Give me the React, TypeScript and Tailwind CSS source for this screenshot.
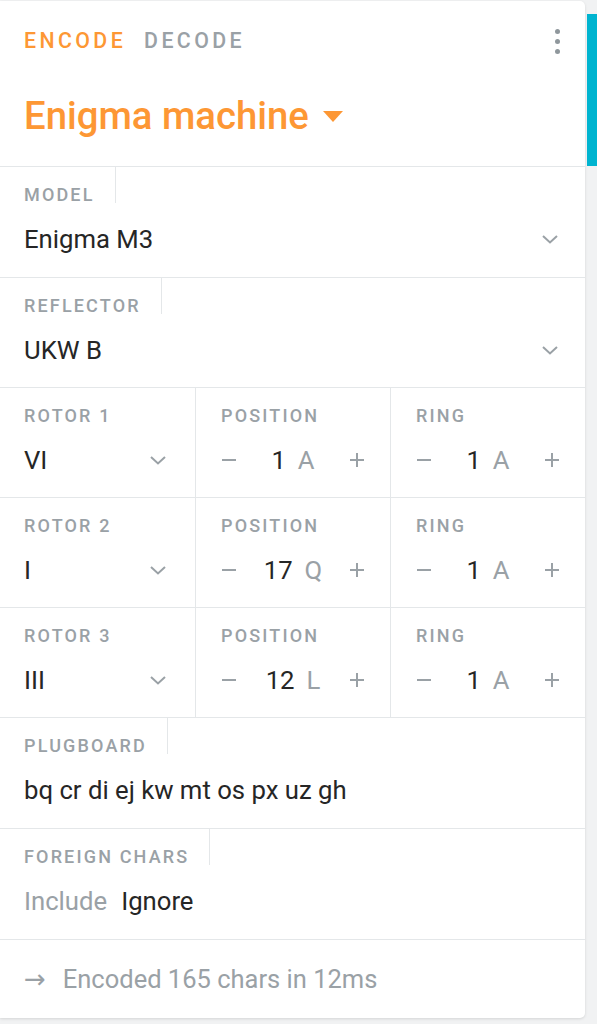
import { ReactNode } from 'react';

const ROTORS = [
  { label: 'ROTOR 1', value: 'VI', pos: 1, posLetter: 'A', ring: 1, ringLetter: 'A' },
  { label: 'ROTOR 2', value: 'I', pos: 17, posLetter: 'Q', ring: 1, ringLetter: 'A' },
  { label: 'ROTOR 3', value: 'III', pos: 12, posLetter: 'L', ring: 1, ringLetter: 'A' },
];

function Chevron() {
  return (
    <svg width="18" height="12" viewBox="0 0 18 12" className="shrink-0">
      <path d="M2 3 L9 9.5 L16 3" fill="none" stroke="#9aa1a6" strokeWidth="2" />
    </svg>
  );
}

function Minus() {
  return (
    <svg width="16" height="16" viewBox="0 0 16 16" className="shrink-0">
      <path d="M1 8 H15" stroke="#9aa1a6" strokeWidth="2" />
    </svg>
  );
}

function Plus() {
  return (
    <svg width="16" height="16" viewBox="0 0 16 16" className="shrink-0">
      <path d="M1 8 H15 M8 1 V15" stroke="#9aa1a6" strokeWidth="2" />
    </svg>
  );
}

// label with the little divider line on its right
function FieldLabel({ children, line = true }: { children: ReactNode; line?: boolean }) {
  return (
    <div className="flex">
      <span
        className={`pt-[19px] leading-[17px] text-[18px] font-medium tracking-[0.12em] text-[#9aa1a6] ${
          line ? 'pr-[20px] border-r border-[#e4e7e9]' : ''
        }`}
      >
        {children}
      </span>
    </div>
  );
}

function Stepper({ label, num, letter }: { label: string; num: number; letter: string }) {
  return (
    <div className="flex-1 border-l border-[#e4e7e9] pl-[25px] pr-[25px]">
      <FieldLabel line={false}>{label}</FieldLabel>
      <div className="mt-[20px] mb-[21px] h-[32px] flex items-center justify-between">
        <Minus />
        <div className="flex items-center gap-[12px] text-[25.7px] leading-[32px]">
          <span className="text-[#262626]">{num}</span>
          <span className="text-[#9aa1a6]">{letter}</span>
        </div>
        <Plus />
      </div>
    </div>
  );
}

function Row({ label, tall, children }: { label: string; tall?: boolean; children: ReactNode }) {
  return (
    <div className="border-t border-[#e4e7e9] pl-[24px] pr-[26px]">
      <FieldLabel>{label}</FieldLabel>
      <div className={`mt-[20px] h-[32px] flex items-center ${tall ? 'mb-[22px]' : 'mb-[21px]'}`}>
        {children}
      </div>
    </div>
  );
}

export default function App() {
  return (
    <div className="min-h-screen bg-[#f1f2f3] flex items-start font-['Roboto',sans-serif]">
      <div className="w-[585px] mt-[1px] bg-white rounded-r-[5px] shadow-[0_1px_3px_rgba(0,0,0,0.12)]">
        {/* Header */}
        <div className="pl-[24px] pr-[24px] pt-[28px] pb-[28px]">
          <div className="flex items-center justify-between h-[24px]">
            <div className="flex gap-[18px] text-[21.3px] font-medium tracking-[0.16em] leading-[24px]">
              <span className="text-[#fd9734]">ENCODE</span>
              <span className="text-[#9aa1a6]">DECODE</span>
            </div>
            <div className="flex flex-col gap-[5px] pr-[1px]">
              <span className="w-[5px] h-[5px] rounded-full bg-[#8f979c]" />
              <span className="w-[5px] h-[5px] rounded-full bg-[#8f979c]" />
              <span className="w-[5px] h-[5px] rounded-full bg-[#8f979c]" />
            </div>
          </div>
          <div className="mt-[41px] flex items-center gap-[14px] h-[44px]">
            <span className="text-[38.3px] leading-[44px] font-medium text-[#fd9734]">Enigma machine</span>
            <svg width="20" height="11" viewBox="0 0 20 11">
              <path d="M0 0 H20 L10 11 Z" fill="#fd9734" />
            </svg>
          </div>
        </div>

        <Row label="MODEL" tall>
          <div className="flex-1 flex items-center justify-between">
            <span className="text-[25.7px] leading-[32px] text-[#262626]">Enigma M3</span>
            <Chevron />
          </div>
        </Row>
        <Row label="REFLECTOR">
          <div className="flex-1 flex items-center justify-between">
            <span className="text-[25.7px] leading-[32px] text-[#262626]">UKW B</span>
            <Chevron />
          </div>
        </Row>

        {/* Rotors */}
        {ROTORS.map((r) => (
          <div key={r.label} className="border-t border-[#e4e7e9] flex">
            <div className="w-[195px] pl-[24px] pr-[28px]">
              <FieldLabel line={false}>{r.label}</FieldLabel>
              <div className="mt-[20px] mb-[21px] h-[32px] flex items-center justify-between">
                <span className="text-[25.7px] leading-[32px] text-[#262626]">{r.value}</span>
                <Chevron />
              </div>
            </div>
            <Stepper label="POSITION" num={r.pos} letter={r.posLetter} />
            <Stepper label="RING" num={r.ring} letter={r.ringLetter} />
          </div>
        ))}

        <Row label="PLUGBOARD" tall>
          <span className="text-[25.7px] leading-[32px] text-[#262626]">bq cr di ej kw mt os px uz gh</span>
        </Row>

        <Row label="FOREIGN CHARS" tall>
          <div className="flex items-center gap-[14px] text-[25.7px] leading-[32px]">
            <span className="text-[#9aa1a6]">Include</span>
            <span className="text-[#262626]">Ignore</span>
          </div>
        </Row>

        {/* Status */}
        <div className="border-t border-[#e4e7e9] pl-[24px] h-[79px] flex items-center gap-[17px] text-[25.5px] text-[#9aa1a6]">
          <span className="font-['DejaVu_Sans',sans-serif] text-[26px] leading-[32px]">→</span>
          <span>Encoded 165 chars in 12ms</span>
        </div>
      </div>
      <div className="ml-[2px] mt-[14px] h-[152px] flex-1 bg-[#00b4d0]" />
    </div>
  );
}
